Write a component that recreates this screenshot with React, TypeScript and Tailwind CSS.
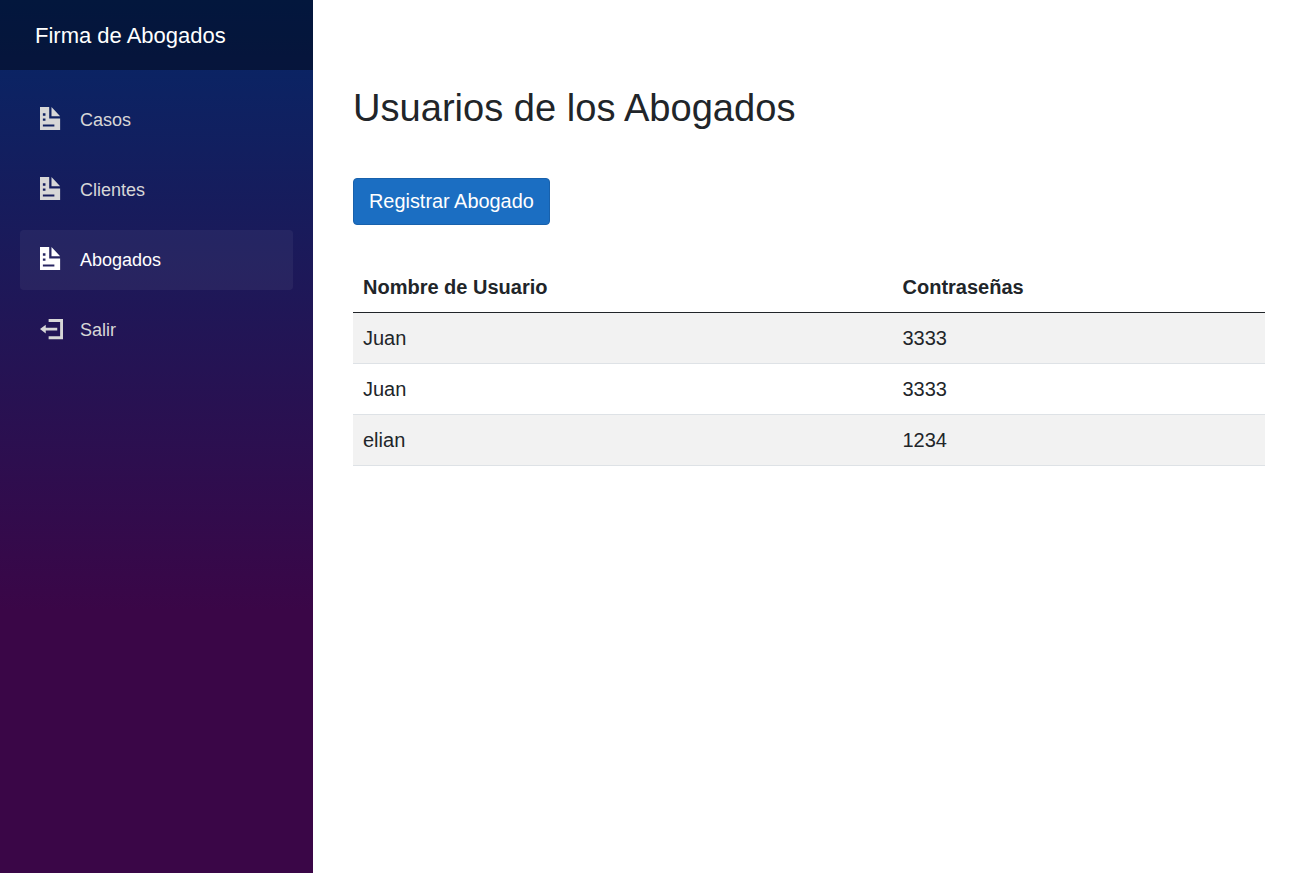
const DocumentIcon = () => (
  <svg viewBox="0 0 8 8" className="w-[23px] h-[23px] -mt-[3px] fill-current">
    <path d="M0 0v8h7v-4h-3.8v-4h-3.2zm4 0v3.2h3l-3-3.2zm-3 2.2h.9v.8h-.9v-.8zm0 1.8h.9v.8h-.9v-.8zm0 2.1h4v.7h-4v-.7z" />
  </svg>
)

const LogoutIcon = () => (
  <svg viewBox="0 0 8 8" className="w-[23px] h-[23px] fill-current">
    <path d="M3 0v1h4v5h-4v1h5v-7h-5zm-1 2l-2 1.5 2 1.5v-1h4v-1h-4v-1z" />
  </svg>
)

const navItems = [
  { label: "Casos", icon: <DocumentIcon /> },
  { label: "Clientes", icon: <DocumentIcon /> },
  { label: "Abogados", icon: <DocumentIcon />, active: true },
  { label: "Salir", icon: <LogoutIcon /> },
]

const rows = [
  { user: "Juan", pass: "3333" },
  { user: "Juan", pass: "3333" },
  { user: "elian", pass: "1234" },
]

const Sidebar = () => {
  return (
    <aside className="w-[313px] shrink-0 min-h-[873px] bg-[linear-gradient(180deg,#052767_0%,#3a0647_70%)]">
      <div className="flex items-center h-[70px] pl-[35px] pt-px bg-black/40 text-[22px] text-white">
        Firma de Abogados
      </div>
      <nav className="pt-[15px] px-5">
        {navItems.map((item) => (
          <div key={item.label} className="pt-[5px] h-[70px]">
            <a
              className={
                item.active
                  ? "flex items-center h-[60px] rounded bg-white/[0.05] text-white text-[18px]"
                  : "flex items-center h-[60px] rounded text-[#d7d7d7] text-[18px]"
              }
            >
              <span className="flex w-[23px] ml-5 mr-[17px]">{item.icon}</span>
              {item.label}
            </a>
          </div>
        ))}
      </nav>
    </aside>
  )
}

export default function App() {
  return (
    <div className="flex w-full min-h-screen bg-white font-['Liberation_Sans',Arial,sans-serif] overflow-hidden">
      <Sidebar />
      <main className="flex-1 pl-10 pr-[30px] text-[#212529]">
        <h1 className="mt-[85px] text-[38.1px] leading-[46px] font-normal">Usuarios de los Abogados</h1>
        <button className="block mt-[47px] h-[47px] px-[15px] rounded bg-[#1b6ec2] border border-[#1861ac] text-white text-[19.9px]">
          Registrar Abogado
        </button>
        <table className="w-full mt-[37px] border-collapse text-[20px] table-fixed">
          <thead>
            <tr className="h-[50px] border-b border-[#212529]">
              <th className="w-[539.5px] px-[10px] text-left font-bold">Nombre de Usuario</th>
              <th className="px-[10px] text-left font-bold">Contraseñas</th>
            </tr>
          </thead>
          <tbody>
            {rows.map((row, i) => (
              <tr key={i} className={i % 2 === 0 ? "h-[51px] bg-[#f2f2f2] border-b border-[#dee2e6]" : "h-[51px] border-b border-[#dee2e6]"}>
                <td className="px-[10px]">{row.user}</td>
                <td className="px-[10px]">{row.pass}</td>
              </tr>
            ))}
          </tbody>
        </table>
      </main>
    </div>
  )
}
